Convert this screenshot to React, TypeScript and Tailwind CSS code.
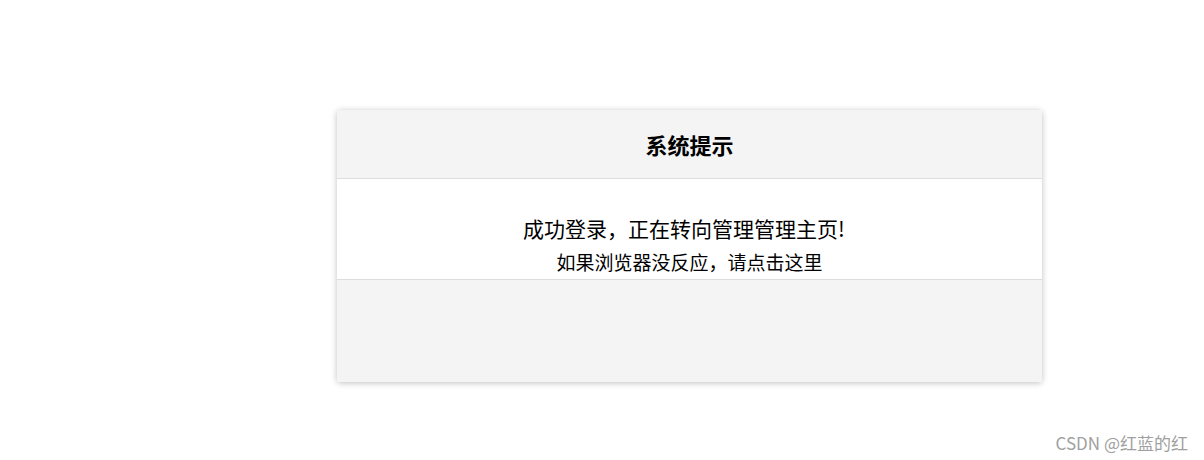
export default function App() {
  return (
    <div
      className="relative h-[460px] w-[1204px] bg-white overflow-hidden"
      style={{ fontFamily: '"Microsoft YaHei", "Noto Sans CJK SC", "Noto Sans", sans-serif' }}
    >
      <div className="pt-[110px] pl-[337px]">
        <div className="w-[705px] rounded-[3px] overflow-hidden shadow-[0_1px_6px_rgba(0,0,0,0.25)]">
          {/* header */}
          <div className="h-[69px] flex items-center justify-center bg-[#f4f4f4] border-b border-[#dddddd]">
            <h1 className="text-[22px] font-bold text-black leading-none">系统提示</h1>
          </div>

          {/* body */}
          <div className="h-[101px] bg-white border-b border-[#dddddd] flex flex-col items-center pt-[37px]">
            <p className="text-[21px] leading-[24px] text-black mr-[11px]">成功登录，正在转向管理管理主页!</p>
            <p className="text-[19px] leading-[24px] mt-[10px] text-black">如果浏览器没反应，请点击这里</p>
          </div>

          {/* footer */}
          <div className="h-[102px] bg-[#f4f4f4]" />
        </div>
      </div>

      {/* watermark */}
      <div className="absolute right-[16px] top-[430px] text-[17px] text-[#a0a0a0]">CSDN @红蓝的红</div>
    </div>
  );
}
